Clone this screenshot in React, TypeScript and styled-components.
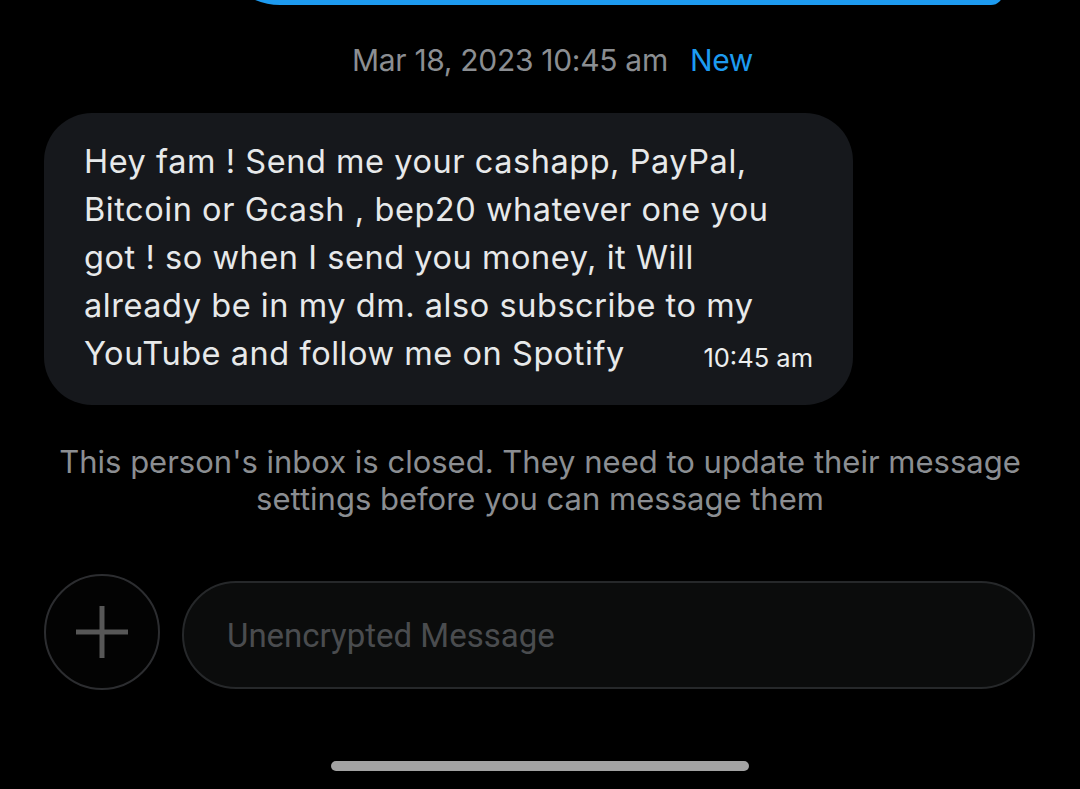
import React from "react";
import styled, { createGlobalStyle } from "styled-components";

const Global = createGlobalStyle`
  html, body { margin: 0; padding: 0; background: #000; }
  body { font-family: Inter, "Noto Sans", sans-serif; -webkit-font-smoothing: antialiased; }
  #root { width: 1080px; height: 789px; overflow: hidden; background: #000; }
`;

const Screen = styled.div`
  display: flex;
  flex-direction: column;
  width: 1080px;
  height: 789px;
  background: #000;
`;

const SentTailWrap = styled.div`
  height: 5px;
  overflow: hidden;
  padding: 0 77px 0 215px;
`;

const SentTail = styled.div`
  height: 100px;
  margin-top: -95px;
  background: #1d9bf0;
  border-radius: 0 0 12px 65px;
`;

const DateRow = styled.div`
  margin-top: 37px;
  padding-left: 25px;
  display: flex;
  justify-content: center;
  gap: 22px;
  font-family: Inter, sans-serif;
  font-size: 30px;
  line-height: 36px;
  color: #8b8e92;
  letter-spacing: -0.3px;
`;

const NewTag = styled.span`
  color: #1d9bf0;
`;

const Bubble = styled.div`
  margin: 35px 0 0 44px;
  width: 809px;
  box-sizing: border-box;
  padding: 25px 40px 25px 40px;
  background: #16181c;
  border-radius: 48px;
  color: #e7e9ea;
  font-family: Inter, sans-serif;
  font-size: 32.5px;
  letter-spacing: 0.55px;
  line-height: 48px;
`;

const Line = styled.div`
  white-space: nowrap;
`;

const LastLine = styled.div`
  display: flex;
  justify-content: space-between;
  align-items: baseline;
  white-space: nowrap;
`;

const Time = styled.span`
  font-size: 25.5px;
  letter-spacing: 0;
  color: #eceeef;
  transform: translateY(2px);
`;

const Info = styled.div`
  margin-top: 38px;
  text-align: center;
  font-family: Inter, sans-serif;
  font-size: 31px;
  line-height: 37px;
  color: #8b8e92;
`;

const InputRow = styled.div`
  margin-top: 57px;
  display: flex;
  align-items: center;
  gap: 22px;
  padding: 0 45px 0 44px;
  height: 116px;
`;

const PlusButton = styled.div`
  width: 116px;
  height: 116px;
  box-sizing: border-box;
  border-radius: 50%;
  border: 2px solid #2c2d30;
  background: #030303;
  display: flex;
  align-items: center;
  justify-content: center;
  flex-shrink: 0;
`;

const Pill = styled.div`
  flex: 1;
  height: 108px;
  margin-top: 6px;
  box-sizing: border-box;
  border-radius: 54px;
  border: 2px solid #26282a;
  background: #0b0c0c;
  display: flex;
  align-items: center;
  padding-left: 43px;
  font-family: Roboto, sans-serif;
  font-size: 33px;
  color: #4a4c4f;
`;

const HomeBar = styled.div`
  margin: 71px auto 0;
  width: 418px;
  height: 10px;
  border-radius: 5px;
  background: #a3a3a3;
`;

export default function App() {
  return (
    <>
      <Global />
      <Screen>
        <SentTailWrap>
          <SentTail />
        </SentTailWrap>
        <DateRow>
          <span>Mar 18, 2023 10:45 am</span>
          <NewTag>New</NewTag>
        </DateRow>
        <Bubble>
          <Line>Hey fam ! Send me your cashapp, PayPal,</Line>
          <Line>Bitcoin or Gcash , bep20 whatever one you</Line>
          <Line>got ! so when I send you money, it Will</Line>
          <Line>already be in my dm. also subscribe to my</Line>
          <LastLine>
            <span>YouTube and follow me on Spotify</span>
            <Time>10:45 am</Time>
          </LastLine>
        </Bubble>
        <Info>
          This person's inbox is closed. They need to update their message
          <br />
          settings before you can message them
        </Info>
        <InputRow>
          <PlusButton>
            <svg width="52" height="52" viewBox="0 0 52 52">
              <path d="M26 0V52M0 26H52" stroke="#575757" strokeWidth="5" />
            </svg>
          </PlusButton>
          <Pill>Unencrypted Message</Pill>
        </InputRow>
        <HomeBar />
      </Screen>
    </>
  );
}
